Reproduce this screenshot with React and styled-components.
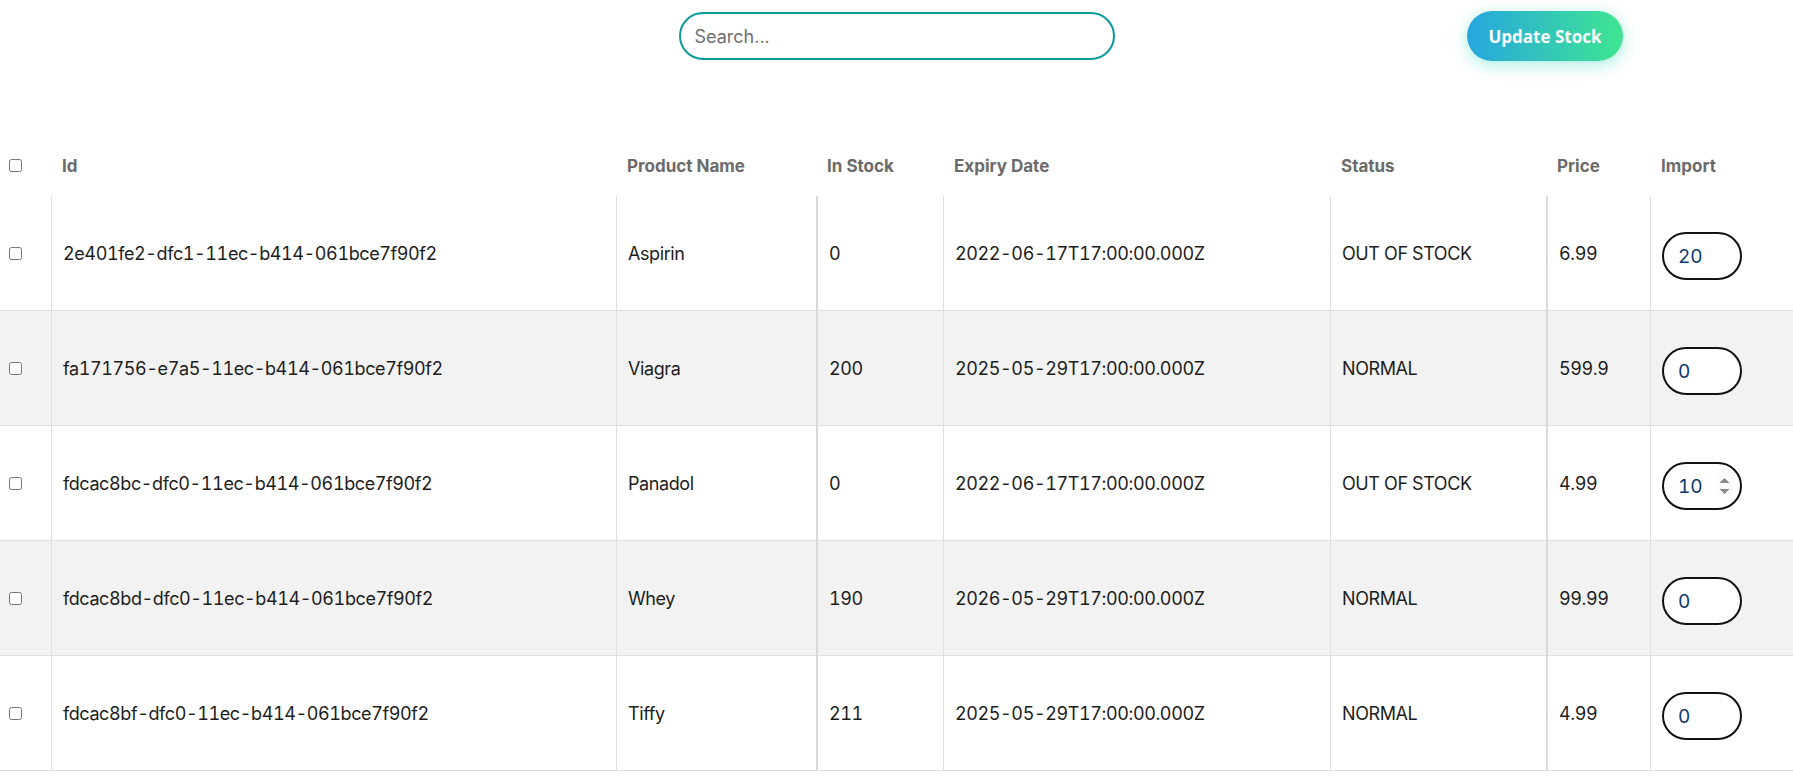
import React, { useState } from "react";
import styled, { createGlobalStyle } from "styled-components";

const GlobalStyle = createGlobalStyle`
  body {
    margin: 0;
    background: #fff;
    font-family: Inter, "Noto Sans", sans-serif;
  }
`;

const rows = [
  { id: "2e401fe2-dfc1-11ec-b414-061bce7f90f2", name: "Aspirin", stock: 0, expiry: "2022-06-17T17:00:00.000Z", status: "OUT OF STOCK", price: "6.99", imp: "20" },
  { id: "fa171756-e7a5-11ec-b414-061bce7f90f2", name: "Viagra", stock: 200, expiry: "2025-05-29T17:00:00.000Z", status: "NORMAL", price: "599.9", imp: "0" },
  { id: "fdcac8bc-dfc0-11ec-b414-061bce7f90f2", name: "Panadol", stock: 0, expiry: "2022-06-17T17:00:00.000Z", status: "OUT OF STOCK", price: "4.99", imp: "10", active: true },
  { id: "fdcac8bd-dfc0-11ec-b414-061bce7f90f2", name: "Whey", stock: 190, expiry: "2026-05-29T17:00:00.000Z", status: "NORMAL", price: "99.99", imp: "0" },
  { id: "fdcac8bf-dfc0-11ec-b414-061bce7f90f2", name: "Tiffy", stock: 211, expiry: "2025-05-29T17:00:00.000Z", status: "NORMAL", price: "4.99", imp: "0" },
];

// column widths, and which columns have a heavier divider on the left
const columns = [
  { title: "", width: 51 },
  { title: "Id", width: 565 },
  { title: "Product Name", width: 200 },
  { title: "In Stock", width: 127, heavy: true },
  { title: "Expiry Date", width: 387 },
  { title: "Status", width: 216 },
  { title: "Price", width: 104, heavy: true },
  { title: "Import", width: 143 },
];

export default function App() {
  const [imports, setImports] = useState(rows.map((r) => r.imp));

  const setImport = (i, v) =>
    setImports((prev) => prev.map((x, j) => (j === i ? v : x)));

  return (
    <Page>
      <GlobalStyle />
      <TopBar>
        <div />
        <SearchInput placeholder="Search..." />
        <ActionSlot>
          <UpdateButton>Update Stock</UpdateButton>
        </ActionSlot>
      </TopBar>

      <Table>
        <colgroup>
          {columns.map((c, i) => (
            <col key={i} style={{ width: c.width }} />
          ))}
        </colgroup>
        <thead>
          <tr>
            <HeadCell>
              <Check type="checkbox" />
            </HeadCell>
            {columns.slice(1).map((c) => (
              <HeadCell key={c.title}>{c.title}</HeadCell>
            ))}
          </tr>
        </thead>
        <tbody>
          {rows.map((r, i) => (
            <Row key={r.id} $striped={i % 2 === 1}>
              <Cell $first>
                <Check type="checkbox" />
              </Cell>
              <Cell>{r.id}</Cell>
              <Cell>{r.name}</Cell>
              <Cell $heavy>{r.stock}</Cell>
              <Cell>{r.expiry}</Cell>
              <Cell>{r.status}</Cell>
              <Cell $heavy>{r.price}</Cell>
              <Cell>
                <ImportInput
                  type="number"
                  value={imports[i]}
                  $active={r.active}
                  autoFocus={r.active}
                  onChange={(e) => setImport(i, e.target.value)}
                />
              </Cell>
            </Row>
          ))}
        </tbody>
      </Table>
    </Page>
  );
}

const Page = styled.div`
  width: 1793px;
  min-height: 783px;
  background: #fff;
`;

const TopBar = styled.div`
  display: grid;
  grid-template-columns: 1fr 436px 1fr;
  align-items: center;
  height: 72px;
`;

const SearchInput = styled.input`
  box-sizing: border-box;
  width: 436px;
  height: 48px;
  border: 2px solid #0a9a9c;
  border-radius: 24px;
  padding: 0 14px;
  font-family: Inter, sans-serif;
  font-size: 18px;
  color: #333;
  outline: none;

  &::placeholder {
    color: #6f6f6f;
  }
`;

const ActionSlot = styled.div`
  display: flex;
  justify-content: flex-end;
  padding-right: 170px;
`;

const UpdateButton = styled.button`
  width: 156px;
  height: 50px;
  border: none;
  border-radius: 25px;
  background: linear-gradient(90deg, #27a6df 0%, #3fe591 100%);
  color: #fff;
  font-family: "Open Sans", sans-serif;
  font-size: 17px;
  font-weight: 700;
  box-shadow: 0 4px 16px rgba(60, 220, 190, 0.45);
  cursor: pointer;
`;

const Table = styled.table`
  width: 1793px;
  table-layout: fixed;
  border-collapse: separate;
  border-spacing: 0;
  margin-top: 64px;
`;

const HeadCell = styled.th`
  height: 60px;
  padding: 0 11px;
  text-align: left;
  font-size: 17px;
  font-weight: 700;
  color: #6b6b6b;
  vertical-align: middle;

  &:first-child {
    padding: 0 0 0 6px;
  }
`;

const Row = styled.tr`
  background: ${(p) => (p.$striped ? "#f2f2f2" : "#fff")};
`;

const Cell = styled.td`
  height: 114px;
  padding: 0 11px;
  border-bottom: 1px solid #e0e0e0;
  border-left: ${(p) =>
    p.$first ? "none" : p.$heavy ? "2px solid #dadada" : "1px solid #e0e0e0"};
  font-size: 18px;
  font-variant-numeric: tabular-nums;
  letter-spacing: -0.4px;
  color: #1d1d1d;
  vertical-align: middle;
  white-space: nowrap;

  &:first-child {
    padding: 0 0 0 6px;
  }
`;

const Check = styled.input`
  width: 13px;
  height: 13px;
  margin: 0 3px;
`;

const ImportInput = styled.input`
  display: block;
  box-sizing: border-box;
  width: 80px;
  height: 48px;
  margin-top: 6px;
  padding: 0 8px 0 14px;
  border: 2px solid #111;
  border-radius: 24px;
  font-family: Inter, sans-serif;
  font-size: 19px;
  font-variant-numeric: tabular-nums;
  letter-spacing: 0;
  color: #0b3a6e;
  background: #fff;
  outline: none;

  &::-webkit-inner-spin-button,
  &::-webkit-outer-spin-button {
    opacity: ${(p) => (p.$active ? 1 : 0)};
  }
`;
